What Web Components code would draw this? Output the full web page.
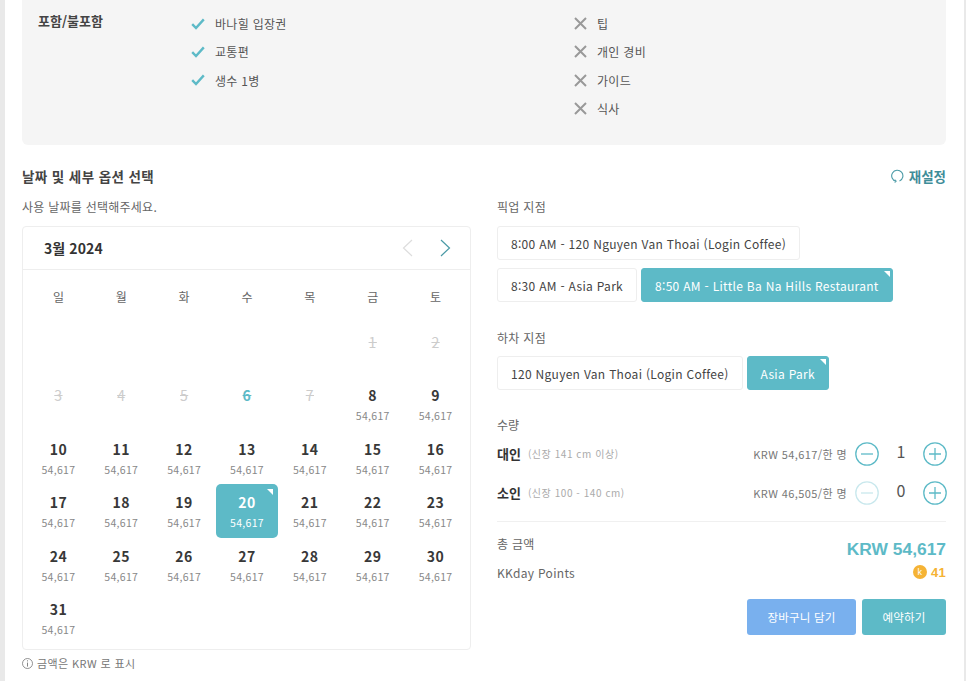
<!DOCTYPE html>
<html lang="ko">
<head>
<meta charset="utf-8">
<title>KKday</title>
<style>
  html, body { margin: 0; height: 681px; overflow: hidden; background: #fff; }
  body {
    font-family: "Noto Sans CJK KR", "Noto Sans", sans-serif;
    color: #333;
  }
</style>
</head>
<body>
<booking-page></booking-page>
<script>
const ICON_CHECK = `<svg width="14" height="12" viewBox="0 0 14 12"><path d="M1.2 6.2 L5 10 L12.8 1.4" fill="none" stroke="#5dbac7" stroke-width="2.4"/></svg>`;
const ICON_CROSS = `<svg width="13" height="13" viewBox="0 0 13 13"><path d="M1 1 L12 12 M12 1 L1 12" fill="none" stroke="#999" stroke-width="2"/></svg>`;

class IncludeItem extends HTMLElement {
    constructor() {
        super();
        this.attachShadow({ mode: 'open' });
    }

    connectedCallback() {
        const no = this.getAttribute('type') === 'no';
        this.shadowRoot.innerHTML = `
        <style>
          :host { display: flex; align-items: center; height: 28.3px; font-size: 12px; color: #555; letter-spacing: .3px; }
          .icon { width: ${no ? 23 : 24}px; display: flex; align-items: center; }
        </style>
        <span class="icon">${no ? ICON_CROSS : ICON_CHECK}</span><slot></slot>`;
    }
}

class IncludePanel extends HTMLElement {
    constructor() {
        super();
        this.attachShadow({ mode: 'open' });
    }

    connectedCallback() {
        this.shadowRoot.innerHTML = `
        <style>
          :host { display: grid; grid-template-columns: 153px 383px 1fr; height: 145px; box-sizing: border-box;
                  padding: 9.5px 16px 0; background: #f5f5f5; border-radius: 0 0 6px 6px; }
          h3 { margin: 1.5px 0 0; font-size: 13px; line-height: 20px; font-weight: 700; color: #444; }
        </style>
        <h3>포함/불포함</h3>
        <div>
          <include-item>바나힐 입장권</include-item>
          <include-item>교통편</include-item>
          <include-item>생수 1병</include-item>
        </div>
        <div>
          <include-item type="no">팁</include-item>
          <include-item type="no">개인 경비</include-item>
          <include-item type="no">가이드</include-item>
          <include-item type="no">식사</include-item>
        </div>`;
    }
}

class DayCell extends HTMLElement {
    constructor() {
        super();
        this.attachShadow({ mode: 'open' });
    }

    connectedCallback() {
        const price = this.getAttribute('price');
        this.shadowRoot.innerHTML = `
        <style>
          :host { display: block; position: relative; height: 54px; text-align: center; border-radius: 5px; box-sizing: border-box; padding-top: 8px; }
          .n { font-size: 14px; line-height: 20px; font-weight: 700; color: #383838; letter-spacing: .5px; }
          .p { font-size: 10.5px; line-height: 16px; margin-top: 3px; color: #888; letter-spacing: .3px; }
          :host([off]) .n { color: #ccc; text-decoration: line-through; font-weight: 400; }
          :host([today]) .n { color: #5dbac7; text-decoration: line-through; }
          :host([selected]) { background: #5dbac7; }
          :host([selected]) .n, :host([selected]) .p { color: #fff; }
          :host([selected])::after { content: ""; position: absolute; top: 5px; right: 5px;
            border-top: 6px solid #fff; border-left: 6px solid transparent; }
        </style>
        <div class="n"><slot></slot></div>
        ${price ? `<div class="p">${price}</div>` : ''}`;
    }
}

class DateCalendar extends HTMLElement {
    constructor() {
        super();
        this.attachShadow({ mode: 'open' });
    }

    connectedCallback() {
        const week = ['일', '월', '화', '수', '목', '금', '토'];
        let cells = '<span></span>'.repeat(5);
        for (let d = 1; d <= 31; d++) {
            if (d <= 7) {
                cells += `<day-cell ${d === 6 ? 'today' : 'off'}>${d}</day-cell>`;
            } else {
                cells += `<day-cell price="54,617" ${d === 20 ? 'selected' : ''}>${d}</day-cell>`;
            }
        }
        this.shadowRoot.innerHTML = `
        <style>
          :host { display: block; height: 424px; box-sizing: border-box; border: 1px solid #eee; border-radius: 4px; }
          header { display: flex; align-items: center; height: 42px; padding: 0 19px 0 21px; border-bottom: 1px solid #eee; }
          h4 { flex: 1; margin: 0; font-size: 14px; font-weight: 700; color: #333; letter-spacing: .1px; }
          header svg { display: block; margin-left: 27px; }
          .grid { display: grid; grid-template-columns: repeat(7, 1fr); padding: 0 3px 0 4px; grid-auto-rows: 53.5px; }
          .wk { height: 53.5px; box-sizing: border-box; padding: 0 3px 1.5px 4px; display: grid; grid-template-columns: repeat(7, 1fr); align-items: center; text-align: center; font-size: 12px; color: #666; }
        </style>
        <header>
          <h4>3월 2024</h4>
          <svg width="11" height="18" viewBox="0 0 11 18"><path d="M10 1 L1.5 9 L10 17" fill="none" stroke="#ddd" stroke-width="1.2"/></svg>
          <svg width="11" height="18" viewBox="0 0 11 18"><path d="M1 1 L9.5 9 L1 17" fill="none" stroke="#4a9aa6" stroke-width="1.2"/></svg>
        </header>
        <div class="wk">${week.map(w => `<span>${w}</span>`).join('')}</div>
        <div class="grid">${cells}</div>`;
    }
}

class OptionButton extends HTMLElement {
    constructor() {
        super();
        this.attachShadow({ mode: 'open' });
    }

    connectedCallback() {
        this.shadowRoot.innerHTML = `
        <style>
          :host { display: inline-flex; align-items: center; position: relative; height: 34px; box-sizing: border-box; padding: 0 13px;
                  border: 1px solid #eee; border-radius: 3px; font-size: 12px; color: #444; letter-spacing: .3px; background: #fff; white-space: nowrap; }
          :host([selected]) { background: #5dbac7; border-color: #5dbac7; color: #fff; }
          :host([selected])::after { content: ""; position: absolute; top: 2px; right: 2px;
            border-top: 6px solid #fff; border-left: 6px solid transparent; }
        </style>
        <slot></slot>`;
    }
}

class OptionGroup extends HTMLElement {
    constructor() {
        super();
        this.attachShadow({ mode: 'open' });
    }

    connectedCallback() {
        this.shadowRoot.innerHTML = `
        <style>
          :host { display: block; }
          .label { font-size: 12px; line-height: 18px; color: #666; letter-spacing: .3px; margin-bottom: var(--label-gap, 10px); }
          .opts { display: flex; flex-wrap: wrap; gap: 8px 4px; padding-right: 12px; }
        </style>
        <div class="label">${this.getAttribute('label')}</div>
        <div class="opts"><slot></slot></div>`;
    }
}

class QtyRow extends HTMLElement {
    constructor() {
        super();
        this.attachShadow({ mode: 'open' });
    }

    connectedCallback() {
        const val = this.getAttribute('value');
        const minusColor = val === '0' ? '#c9e8ed' : '#5dbac7';
        const circle = (inner, color) => `<svg width="24" height="24" viewBox="0 0 24 24"><circle cx="12" cy="12" r="11.2" fill="none" stroke="${color}" stroke-width="1.3"/><path d="${inner}" stroke="${color}" stroke-width="1.3"/></svg>`;
        this.shadowRoot.innerHTML = `
        <style>
          :host { display: flex; align-items: center; height: 39px; margin-right: -1px; }
          b { font-size: 13px; font-weight: 700; color: #333; }
          small { flex: 1; margin-left: 7px; font-size: 10px; color: #aaa; letter-spacing: .55px; }
          .price { font-size: 11px; color: #777; letter-spacing: .4px; margin-right: 8px; }
          .val { width: 44px; text-align: center; font-size: 16px; color: #555; margin-top: -5px; }
          svg { display: block; }
        </style>
        <b>${this.getAttribute('name')}</b>
        <small>${this.getAttribute('note')}</small>
        <span class="price">${this.getAttribute('price')}</span>
        ${circle('M6 12 H18', minusColor)}
        <span class="val">${val}</span>
        ${circle('M6 12 H18 M12 6 V18', '#5dbac7')}`;
    }
}

class TotalBox extends HTMLElement {
    constructor() {
        super();
        this.attachShadow({ mode: 'open' });
    }

    connectedCallback() {
        this.shadowRoot.innerHTML = `
        <style>
          :host { display: block; border-top: 1px solid #f0f0f0; padding-top: 13px; margin-top: 9px; }
          .row { display: flex; justify-content: space-between; align-items: center; color: #666; font-size: 12px; letter-spacing: .3px; }
          .row.total { height: 25px; align-items: flex-start; }
          .row.pts { height: 24px; }
          .amount { font-family: "Liberation Sans", sans-serif; font-size: 17.4px; font-weight: 700; color: #5dbac7; letter-spacing: 0; margin-top: 4px; }
          .coin { display: inline-flex; align-items: center; gap: 4px; font-family: "Liberation Sans", sans-serif; font-weight: 700; font-size: 13px; color: #f5b335; }
          .coin i { width: 14px; height: 14px; border-radius: 50%; background: #f5b335; color: #fff; font-style: normal; font-size: 9px; line-height: 14px; text-align: center; font-weight: 400; }
          .actions { display: flex; justify-content: flex-end; gap: 6px; margin-top: 15px; }
          button { height: 36px; border: 0; border-radius: 3px; color: #fff; font: inherit; font-size: 11.5px; padding: 0; letter-spacing: .2px; }
          .cart { width: 109px; background: #79b0ee; }
          .book { width: 84px; background: #5dbac7; }
        </style>
        <div class="row total"><span>총 금액</span><span class="amount">KRW 54,617</span></div>
        <div class="row pts"><span>KKday Points</span><span class="coin"><i>k</i>41</span></div>
        <div class="actions"><button class="cart">장바구니 담기</button><button class="book">예약하기</button></div>`;
    }
}

class BookingPage extends HTMLElement {
    constructor() {
        super();
        this.attachShadow({ mode: 'open' });
    }

    connectedCallback() {
        this.shadowRoot.innerHTML = `
        <style>
          :host { display: block; box-sizing: border-box; height: 681px; overflow: hidden; padding: 0 18px 0 17px;
                  border-left: 5px solid #e9e9e9; border-right: 2px solid #e9e9e9; }
          .head { display: flex; justify-content: space-between; align-items: center; margin-top: 21px; height: 20px; }
          h2 { margin: 0; font-size: 13.5px; font-weight: 700; color: #444; letter-spacing: .4px; }
          .reset { display: flex; align-items: center; gap: 5px; font-size: 13.5px; font-weight: 700; color: #3f8d99; }
          .cols { display: grid; grid-template-columns: 449px 449px; gap: 26px; margin-top: 12px; }
          .sub { font-size: 12px; line-height: 18px; color: #666; letter-spacing: .25px; margin-bottom: 10px; }
          .note { display: flex; align-items: center; gap: 4px; font-size: 11px; color: #777; margin-top: 5px; letter-spacing: .4px; }
          .stack { display: flex; flex-direction: column; }
          .qlabel { font-size: 12px; line-height: 18px; color: #666; margin-top: 26px; margin-bottom: 0; }
          .dropoff { margin-top: 27px; --label-gap: 9px; }
        </style>
        <include-panel></include-panel>
        <div class="head">
          <h2>날짜 및 세부 옵션 선택</h2>
          <span class="reset"><svg width="13" height="14" viewBox="0 0 13 14"><path d="M5 12.3 A5.6 5.6 0 1 1 8.5 12" fill="none" stroke="#4a9aa6" stroke-width="1.1"/><path d="M4 10.5 L5.3 12.4 L3.6 13.6" fill="none" stroke="#4a9aa6" stroke-width="1"/></svg>재설정</span>
        </div>
        <div class="cols">
          <div>
            <div class="sub">사용 날짜를 선택해주세요.</div>
            <date-calendar></date-calendar>
            <div class="note"><svg width="11" height="11" viewBox="0 0 11 11"><circle cx="5.5" cy="5.5" r="5" fill="none" stroke="#777" stroke-width=".8"/><path d="M5.5 2.3 V3.4 M5.5 4.6 V8.6" stroke="#777" stroke-width=".9"/></svg>금액은 KRW 로 표시</div>
          </div>
          <div class="stack">
            <option-group label="픽업 지점">
              <option-button>8:00 AM - 120 Nguyen Van Thoai (Login Coffee)</option-button>
              <option-button>8:30 AM - Asia Park</option-button>
              <option-button selected>8:50 AM - Little Ba Na Hills Restaurant</option-button>
            </option-group>
            <option-group class="dropoff" label="하차 지점">
              <option-button>120 Nguyen Van Thoai (Login Coffee)</option-button>
              <option-button selected>Asia Park</option-button>
            </option-group>
            <div class="qlabel">수량</div>
            <qty-row name="대인" note="(신장 141 cm 이상)" price="KRW 54,617/한 명" value="1"></qty-row>
            <qty-row name="소인" note="(신장 100 - 140 cm)" price="KRW 46,505/한 명" value="0"></qty-row>
            <total-box></total-box>
          </div>
        </div>`;
    }
}

customElements.define('include-item', IncludeItem);
customElements.define('include-panel', IncludePanel);
customElements.define('day-cell', DayCell);
customElements.define('date-calendar', DateCalendar);
customElements.define('option-button', OptionButton);
customElements.define('option-group', OptionGroup);
customElements.define('qty-row', QtyRow);
customElements.define('total-box', TotalBox);
customElements.define('booking-page', BookingPage);
</script>
</body>
</html>
